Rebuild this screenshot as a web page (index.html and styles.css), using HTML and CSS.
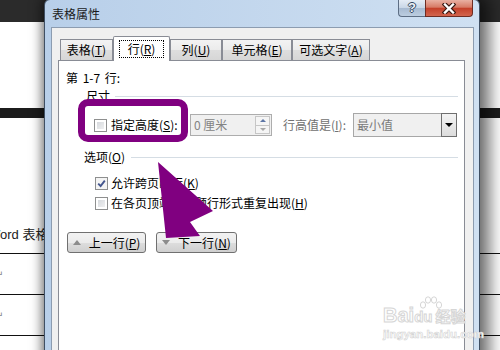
FILE: index.html
```html
<!DOCTYPE html>
<html lang="zh-CN">
<head>
  <meta charset="UTF-8" />
  <title>表格属性</title>
  <link rel="stylesheet" href="styles.css">
</head>
<body>
  <div class="doc">
    <div class="doc-top"></div>
    <div class="doc-band"></div>
    <div class="doc-caption">Word 表格</div>
    <div class="doc-row first"><span class="para">↵</span></div>
    <div class="doc-row"><span class="para">↵</span></div>
    <div class="doc-row"></div>
  </div>

  <div class="dialog">
    <div class="titlebar">
      <span class="title">表格属性</span>
      <div class="caption-btns">
        <span class="cap-help">?</span>
        <span class="cap-close">
          <svg width="14" height="11" viewBox="0 0 14 11">
            <path d="M3 1.5 L11 9.5 M11 1.5 L3 9.5" stroke="#3b1a14" stroke-width="4.6" stroke-linecap="square" />
            <path d="M3 1.5 L11 9.5 M11 1.5 L3 9.5" stroke="#ffffff" stroke-width="2.4" stroke-linecap="square" />
          </svg>
        </span>
      </div>
    </div>

    <div class="client">
      <div class="tabs">
        <div class="tab w1">表格(<u>T</u>)</div>
        <div class="tab active w2"><span class="focus">行(<u>R</u>)</span></div>
        <div class="tab w3">列(<u>U</u>)</div>
        <div class="tab w4">单元格(<u>E</u>)</div>
        <div class="tab w5">可选文字(<u>A</u>)</div>
      </div>

      <div class="panel">
        <div class="range">第 1-7 行:</div>

        <div class="group-head size-head"><span>尺寸</span><i></i></div>
        <div class="size-row">
          <span class="check"></span>
          <span class="size-label">指定高度(<u>S</u>):</span>
          <div class="spin">
            <span class="spin-val">0 厘米</span>
            <div class="spin-btns">
              <span class="spin-up"></span>
              <span class="spin-down"></span>
            </div>
          </div>
          <span class="rule-label">行高值是(<u>I</u>):</span>
          <div class="combo">
            <span class="combo-val">最小值</span>
            <span class="combo-btn"></span>
          </div>
        </div>

        <div class="group-head opt-head"><span>选项(<u>O</u>)</span><i></i></div>
        <div class="opt">
          <span class="check checked">
            <svg width="9" height="9" viewBox="0 0 9 9"><path d="M1.2 4.6 L3.6 7 L7.8 1.6" fill="none" stroke="#44568e" stroke-width="1.9" /></svg>
          </span>
          <span class="opt-text">允许跨页断行(<u>K</u>)</span>
        </div>
        <div class="opt">
          <span class="check"></span>
          <span class="opt-text">在各页顶端以标题行形式重复出现(<u>H</u>)</span>
        </div>

        <div class="nav">
          <button class="nav-btn prev"><span class="tri-up"></span><span class="btn-text">上一行(<u>P</u>)</span></button>
          <button class="nav-btn next"><span class="tri-down"></span><span class="btn-text">下一行(<u>N</u>)</span></button>
        </div>
      </div>
    </div>
  </div>

  <div class="highlight"></div>
  <svg class="arrow" width="500" height="350" viewBox="0 0 500 350">
    <polygon points="158,162 213,211 190,222 200,236 166,238" fill="#800080" />
  </svg>

  <div class="watermark">
    <svg class="wm-paw" width="24" height="18" viewBox="0 0 24 18">
      <ellipse cx="5" cy="9" rx="2.6" ry="3.2" fill="#fff" stroke="#d6d6d6" />
      <ellipse cx="10" cy="4" rx="2.6" ry="3.2" fill="#fff" stroke="#d6d6d6" />
      <ellipse cx="16" cy="4" rx="2.6" ry="3.2" fill="#fff" stroke="#d6d6d6" />
      <ellipse cx="21" cy="9" rx="2.6" ry="3.2" fill="#fff" stroke="#d6d6d6" />
    </svg>
    <div class="wm-logo">Bai<span class="wm-du">du</span><span class="wm-cn">经验</span></div>
    <div class="wm-url">jingyan.baidu.com</div>
  </div>
</body>
</html>
```

FILE: styles.css
```css
body {
  margin: 0;
  width: 500px;
  height: 350px;
  overflow: hidden;
  position: relative;
  background: #ffffff;
  font-family: "Noto Sans CJK SC", "Noto Sans", sans-serif;
  font-size: 12px;
  color: #000000;
}
u {
  text-underline-offset: 1px;
}

/* document behind the dialog */
.doc-top {
  height: 22px;
  background: #2b2b2b;
}
.doc-band {
  height: 10px;
  margin-top: 86px;
  background: #1c1c1c;
}
.doc-caption {
  margin: 108px 0 0 -12px;
  height: 18px;
  line-height: 18px;
  font-family: "Liberation Sans", "Noto Sans CJK SC", sans-serif;
  font-size: 13px;
  color: #222222;
}
.doc-row {
  height: 40px;
  border-top: 1px solid #111111;
  display: flex;
  align-items: center;
}
.doc-row.first {
  margin-top: 9px;
}
.para {
  margin-left: -5px;
  font-family: "DejaVu Sans", sans-serif;
  font-size: 10px;
  color: #8a8a8a;
}

/* dialog window */
.dialog {
  position: absolute;
  left: 44px;
  top: -1px;
  width: 436px;
  height: 380px;
  box-sizing: border-box;
  border: 1px solid #3f4f63;
  border-radius: 6px 6px 0 0;
  padding: 0 5px 0 6px;
  background: linear-gradient(to right, #b8cfe9, #cfe0f2);
  box-shadow: 6px 0 16px 4px rgba(0, 0, 0, 0.55), -3px 0 8px rgba(0, 0, 0, 0.25);
}
.titlebar {
  height: 27px;
  display: flex;
  justify-content: space-between;
}
.title {
  line-height: 27px;
  padding-left: 1px;
  color: #1b1b1b;
}
.caption-btns {
  display: flex;
  height: 17px;
  margin-right: 1px;
}
.cap-help {
  width: 27px;
  height: 17px;
  box-sizing: border-box;
  border: 1px solid #5d6e84;
  border-top: 0;
  border-right: 0;
  border-radius: 0 0 0 4px;
  background: linear-gradient(#e4ecf5, #c9d7e7 48%, #a7bad1 52%, #bccde0);
  text-align: center;
  font: bold 13px/16px "Liberation Sans", sans-serif;
  color: #eef2f7;
  text-shadow: 1px 0 #34465e, -1px 0 #34465e, 0 1px #34465e, 0 -1px #34465e;
}
.cap-close {
  width: 48px;
  height: 17px;
  box-sizing: border-box;
  border: 1px solid #6e2c22;
  border-top: 0;
  border-radius: 0 0 4px 0;
  background: linear-gradient(#e9b0a3, #d77a66 45%, #c4402a 52%, #d2654e);
  display: flex;
  align-items: center;
  justify-content: center;
}

.client {
  height: 360px;
  box-sizing: border-box;
  border: 1px solid #8c9cb0;
  border-bottom: 0;
  background: #f0f0f0;
  padding: 8px 8px 0 6px;
}

/* tabs */
.tabs {
  display: flex;
  align-items: flex-end;
  height: 25px;
  padding-left: 2px;
  margin-bottom: -1px;
  position: relative;
  z-index: 1;
}
.tab {
  height: 21px;
  margin-bottom: 1px;
  box-sizing: border-box;
  border: 1px solid #898c95;
  border-bottom: 0;
  background: linear-gradient(#f3f3f3, #ebebeb 50%, #dedede 51%, #d6d6d6);
  text-align: center;
  line-height: 19px;
  white-space: nowrap;
}
.tab.active {
  height: 25px;
  margin-bottom: 0;
  padding-top: 3px;
  background: #ffffff;
  border-radius: 2px 2px 0 0;
  line-height: 16px;
}
.focus {
  display: inline-block;
  border: 1px dotted #000000;
  padding: 0 8px;
}
.w1 { width: 53px; }
.w2 { width: 57px; }
.w3 { width: 52px; }
.w4 { width: 70px; }
.w5 { width: 78px; }

.panel {
  height: 320px;
  box-sizing: border-box;
  border: 1px solid #898c95;
  background: #ffffff;
}
.range {
  margin: 9px 0 0 7px;
  line-height: 16px;
  word-spacing: 2px;
}
.group-head {
  display: flex;
  align-items: center;
  height: 16px;
  margin-right: 6px;
}
.group-head i {
  flex: 1;
  height: 1px;
  margin-top: 2px;
  background: #d5dde4;
}
.size-head {
  margin-top: 1px;
  padding-left: 27px;
}
.size-head i {
  margin-left: 5px;
}
.opt-head {
  margin-top: 11px;
  padding-left: 25px;
}
.opt-head i {
  margin-left: 6px;
}

.check {
  width: 13px;
  height: 13px;
  flex-shrink: 0;
  box-sizing: border-box;
  border: 1px solid #8e8f8f;
  background: linear-gradient(135deg, #cfd3d8, #f6f6f6);
  box-shadow: inset 0 0 0 2px #ffffff;
  display: flex;
  align-items: center;
  justify-content: center;
}
.check.checked {
  background: #f4f4f4;
  box-shadow: none;
}

.size-row {
  display: flex;
  align-items: center;
  height: 24px;
  margin-top: 10px;
  padding-left: 35px;
}
.size-row .check {
  margin-right: 4px;
}
.size-label {
  width: 79px;
  flex-shrink: 0;
  line-height: 16px;
  white-space: nowrap;
}
.spin {
  width: 82px;
  height: 22px;
  box-sizing: border-box;
  border: 1px solid #adadad;
  background: #f0f0f0;
  display: flex;
}
.spin-val {
  flex: 1;
  padding-left: 3px;
  line-height: 20px;
  color: #838383;
}
.spin-btns {
  width: 15px;
  padding: 1px 1px 1px 0;
  display: flex;
  flex-direction: column;
}
.spin-up,
.spin-down {
  flex: 1;
  border: 1px solid #c6c6c6;
  background: #f5f5f5;
  display: flex;
  align-items: center;
  justify-content: center;
}
.spin-down {
  border-top: 0;
}
.spin-up::before {
  content: "";
  border-left: 3px solid transparent;
  border-right: 3px solid transparent;
  border-bottom: 3px solid #5d76a6;
}
.spin-down::before {
  content: "";
  border-left: 3px solid transparent;
  border-right: 3px solid transparent;
  border-top: 3px solid #a8a8a8;
}
.rule-label {
  width: 70px;
  flex-shrink: 0;
  margin-left: 11px;
  line-height: 16px;
  color: #707070;
  white-space: nowrap;
}
.combo {
  width: 104px;
  height: 24px;
  box-sizing: border-box;
  border: 1px solid #a7a7a7;
  border-right: 0;
  background: #f0f0f0;
  display: flex;
}
.combo-val {
  flex: 1;
  padding-left: 3px;
  line-height: 22px;
  color: #7a7a7a;
}
.combo-btn {
  width: 16px;
  margin-top: -1px;
  height: 24px;
  box-sizing: border-box;
  border: 1px solid #6f6f6f;
  background: linear-gradient(#f4f4f4, #dcdcdc);
  display: flex;
  align-items: center;
  justify-content: center;
}
.combo-btn::before {
  content: "";
  border-left: 4px solid transparent;
  border-right: 4px solid transparent;
  border-top: 4px solid #000000;
}

.opt {
  display: flex;
  align-items: center;
  height: 20px;
  padding-left: 36px;
}
.opt-head + .opt {
  margin-top: 9px;
}
.opt .check {
  margin-right: 3px;
}
.opt-text {
  white-space: nowrap;
  line-height: 16px;
}

.nav {
  display: flex;
  gap: 10px;
  margin-top: 19px;
  padding-left: 8px;
}
.nav-btn {
  height: 21px;
  padding: 0;
  box-sizing: border-box;
  border: 1px solid #707070;
  border-radius: 3px;
  background: linear-gradient(#f2f2f2, #ebebeb 50%, #dddddd 51%, #cfcfcf);
  font-family: inherit;
  font-size: 12px;
  color: #000000;
  display: flex;
  align-items: center;
  justify-content: center;
  gap: 8px;
}
.btn-text {
  white-space: nowrap;
  line-height: 17px;
}
.nav-btn.prev { width: 79px; }
.nav-btn.next { width: 81px; }
.tri-up {
  border-left: 4px solid transparent;
  border-right: 4px solid transparent;
  border-bottom: 5px solid #8c8c8c;
}
.tri-down {
  border-left: 4px solid transparent;
  border-right: 4px solid transparent;
  border-top: 5px solid #8c8c8c;
}

/* annotations laid over the screenshot */
.highlight {
  position: absolute;
  left: 78px;
  top: 99px;
  width: 110px;
  height: 43px;
  box-sizing: border-box;
  border: 7px solid #800080;
  border-radius: 10px;
}
.arrow {
  position: absolute;
  left: 0;
  top: 0;
}

.watermark {
  position: absolute;
  left: 383px;
  top: 304px;
  font-family: "Liberation Sans", sans-serif;
}
.wm-paw {
  position: absolute;
  left: 35px;
  top: -8px;
}
.wm-logo {
  position: relative;
  font-size: 20px;
  font-weight: bold;
  line-height: 22px;
  color: #ffffff;
  -webkit-text-stroke: 1px #d6d6d6;
}
.wm-du {
  font-size: 15px;
}
.wm-cn {
  margin-left: 3px;
  font-family: "Noto Sans CJK SC", sans-serif;
  font-size: 15px;
}
.wm-url {
  font-size: 11.5px;
  font-weight: bold;
  line-height: 13px;
  color: #ffffff;
  -webkit-text-stroke: 0.6px #d3d3d3;
}
```
